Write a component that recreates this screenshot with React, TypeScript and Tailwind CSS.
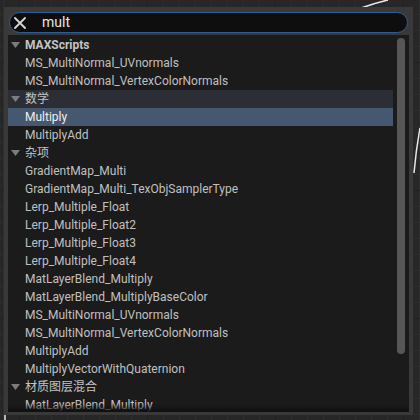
const rows: { text: string; kind: "head" | "item" | "sel" | "headSel" }[] = [
  { text: "MAXScripts", kind: "head" },
  { text: "MS_MultiNormal_UVnormals", kind: "item" },
  { text: "MS_MultiNormal_VertexColorNormals", kind: "item" },
  { text: "数学", kind: "headSel" },
  { text: "Multiply", kind: "sel" },
  { text: "MultiplyAdd", kind: "item" },
  { text: "杂项", kind: "head" },
  { text: "GradientMap_Multi", kind: "item" },
  { text: "GradientMap_Multi_TexObjSamplerType", kind: "item" },
  { text: "Lerp_Multiple_Float", kind: "item" },
  { text: "Lerp_Multiple_Float2", kind: "item" },
  { text: "Lerp_Multiple_Float3", kind: "item" },
  { text: "Lerp_Multiple_Float4", kind: "item" },
  { text: "MatLayerBlend_Multiply", kind: "item" },
  { text: "MatLayerBlend_MultiplyBaseColor", kind: "item" },
  { text: "MS_MultiNormal_UVnormals", kind: "item" },
  { text: "MS_MultiNormal_VertexColorNormals", kind: "item" },
  { text: "MultiplyAdd", kind: "item" },
  { text: "MultiplyVectorWithQuaternion", kind: "item" },
  { text: "材质图层混合", kind: "head" },
  { text: "MatLayerBlend_Multiply", kind: "item" },
];

function Caret() {
  return (
    <svg width="9" height="6" viewBox="0 0 9 6" className="ml-[3px] mr-[1px] shrink-0">
      <path d="M0 0 L9 0 L4.5 6 Z" fill="#7c7c7c" />
    </svg>
  );
}

function Row({ text, kind }: { text: string; kind: string }) {
  const head = kind === "head" || kind === "headSel";
  const bg =
    kind === "sel" ? "bg-[#45586f]" : kind === "headSel" ? "bg-[#2b2f35]" : "";
  return (
    <div className={`flex h-[18px] items-center ${bg}`}>
      {head ? (
        <>
          <Caret />
          <span
            className={`pl-[4px] text-[12px] text-[#c4c4c4] ${
              text === "MAXScripts" ? "font-bold" : ""
            }`}
          >
            {text}
          </span>
        </>
      ) : (
        <span
          className={`pl-[17px] text-[12px] ${
            kind === "sel" ? "text-[#f0f0f0]" : "text-[#c0c0c0]"
          }`}
        >
          {text}
        </span>
      )}
    </div>
  );
}

export default function App() {
  return (
    <div
      className="relative h-[420px] w-[420px] overflow-hidden bg-[#272727]"
      style={{ fontFamily: "Roboto, 'Noto Sans CJK SC', sans-serif" }}
    >
      {/* node graph canvas behind the popup */}
      <svg className="absolute inset-0" width="420" height="420">
        <defs>
          <pattern id="minor" width="16" height="16" patternUnits="userSpaceOnUse" x="3" y="14">
            <path d="M16 0 L0 0 0 16" fill="none" stroke="#333333" strokeWidth="1" />
          </pattern>
          <pattern id="major" width="128" height="128" patternUnits="userSpaceOnUse" x="19" y="62">
            <path d="M128 0 L0 0 0 128" fill="none" stroke="#161616" strokeWidth="1" />
          </pattern>
        </defs>
        <rect width="420" height="420" fill="url(#minor)" />
        <rect width="420" height="420" fill="url(#major)" />
        <path d="M361 8 Q375 3 388 0" stroke="#e8e8e8" strokeWidth="1.5" fill="none" />
        <path d="M414 173 Q416 150 420 128" stroke="#e8e8e8" strokeWidth="1.5" fill="none" />
        <path d="M5 414 L5 420" stroke="#e8e8e8" strokeWidth="1.5" fill="none" />
      </svg>

      <div className="absolute left-[4px] top-[7px] flex h-[408px] w-[409px] flex-col bg-[#393939] pb-[3px] pl-[4px] pr-[4px] pt-[5px]">
        <div className="ml-[1px] flex h-[21px] w-[399px] shrink-0 items-center rounded-full border border-[#2f5d93] bg-[#0e0e0e]">
          <svg width="12" height="12" viewBox="0 0 12 12" className="ml-[4px]">
            <path d="M1 1 L11 11 M11 1 L1 11" stroke="#d6d6d6" strokeWidth="1.8" strokeLinecap="round" />
          </svg>
          <span className="ml-[16px] text-[14px] text-[#e6e6e6]">mult</span>
        </div>
        <div className="relative mt-[2px] flex min-h-0 flex-1 overflow-hidden bg-[#1b1b1b]">
          <div className="w-[385px] shrink-0 pt-[1px]">
            {rows.map((r, i) => (
              <Row key={i} text={r.text} kind={r.kind} />
            ))}
          </div>
          <div className="ml-[4px] pt-[3px]">
            <div className="h-[316px] w-[8px] rounded-full bg-[#575757]" />
          </div>
          <div className="pointer-events-none absolute bottom-0 left-0 right-0 h-[8px] bg-gradient-to-b from-transparent to-[#0f0f0f]" />
        </div>
      </div>
    </div>
  );
}
